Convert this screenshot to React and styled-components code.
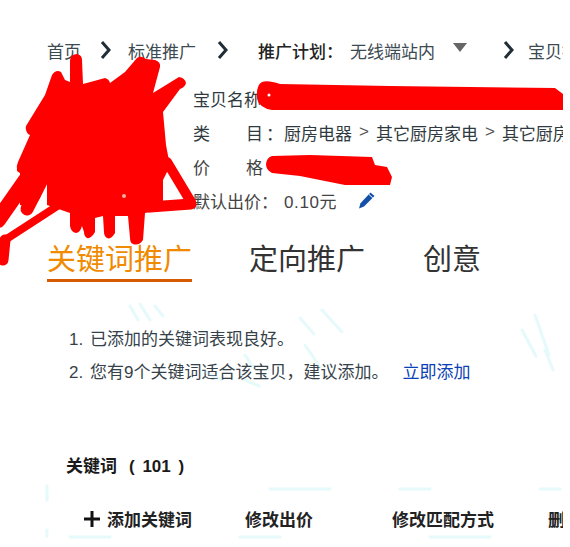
import React from 'react';
import styled, { createGlobalStyle } from 'styled-components';

const GlobalStyle = createGlobalStyle`
  html, body {
    margin: 0;
    padding: 0;
    background: #fff;
  }
  body {
    font-family: "Liberation Sans", "Noto Sans CJK SC", sans-serif;
    color: #333;
  }
`;

const Page = styled.div`
  position: relative;
  width: 563px;
  height: 547px;
  overflow: hidden;
  padding: 39px 0 0 47px;
  box-sizing: border-box;
`;

const Crumbs = styled.div`
  display: flex;
  align-items: center;
  height: 22px;
  font-size: 17px;
  white-space: nowrap;
`;

const Crumb = styled.span`
  color: ${({ $strong }) => ($strong ? '#222' : '#3c4a52')};
  font-weight: ${({ $strong }) => ($strong ? 500 : 400)};
  margin-left: ${({ $gap }) => $gap || 0}px;
`;

const Chevron = styled.svg`
  width: 12px;
  height: 20px;
  flex: none;
  margin-left: ${({ $gap }) => $gap || 0}px;
`;

const Caret = styled.span`
  width: 0;
  height: 0;
  flex: none;
  margin: -6px 0 0 18px;
  border-left: 7px solid transparent;
  border-right: 7px solid transparent;
  border-top: 9px solid #666;
`;

const Info = styled.div`
  display: flex;
  flex-direction: column;
  margin: 20px 0 0 146px;
  font-size: 17px;
  white-space: nowrap;
`;

const Row = styled.div`
  display: flex;
  align-items: center;
  height: 34px;
  color: ${({ $soft }) => ($soft ? '#444' : '#2f3a40')};
`;

const Label = styled.span`
  width: 91px;
  flex: none;
  display: flex;
`;

const LabelPair = styled.span`
  display: flex;
  justify-content: space-between;
  width: 70px;
`;

const Colon = styled.span`
  margin-left: 3px;
`;

const Sep = styled.span`
  margin: 0 7px;
  color: #555;
`;

const Price = styled.span`
  letter-spacing: 0.6px;
`;

const Pencil = styled.svg`
  width: 18px;
  height: 18px;
  margin-left: 21px;
`;

const Tabs = styled.div`
  display: flex;
  margin-top: 23px;
  font-size: 29px;
  line-height: 40px;
  white-space: nowrap;
`;

const Tab = styled.div`
  height: 39px;
  margin-right: ${({ $gap }) => $gap}px;
  color: ${({ $active }) => ($active ? '#f08a00' : '#333')};
  border-bottom: ${({ $active }) => ($active ? '3px solid #d65a00' : '3px solid transparent')};
`;

const Tips = styled.ol`
  list-style: none;
  margin: 41px 0 0 22px;
  padding: 0;
  font-size: 17px;
`;

const Tip = styled.li`
  height: 33px;
  line-height: 33px;
  color: #36424a;
  white-space: nowrap;
  display: flex;
`;

const TipNumber = styled.span`
  width: 21px;
  flex: none;
`;

const AddLink = styled.a`
  color: #0a3fb5;
  margin-left: 14px;
`;

const Heading = styled.div`
  margin: 67px 0 0 19px;
  font-size: 17px;
  font-weight: 700;
  color: #1a1a1a;
  line-height: 22px;
`;

const Count = styled.span`
  margin-left: 12px;
  word-spacing: 3px;
`;

const Toolbar = styled.div`
  display: flex;
  align-items: center;
  margin: 28px 0 0 37px;
  font-size: 17px;
  font-weight: 700;
  color: #222;
  white-space: nowrap;
`;

const ToolButton = styled.span`
  display: flex;
  align-items: center;
  margin-right: ${({ $gap }) => $gap}px;
`;

const PlusIcon = styled.svg`
  width: 16px;
  height: 16px;
  margin-right: 7px;
`;

const Scribble = styled.svg`
  position: absolute;
  left: 0;
  top: 0;
  width: 563px;
  height: 547px;
  pointer-events: none;
`;

const Smudges = styled.svg`
  position: absolute;
  left: 0;
  top: 0;
  width: 563px;
  height: 547px;
  pointer-events: none;
  opacity: 0.3;
`;

const chevron = <path d="M2 2l7 8-7 8" fill="none" stroke="#1f2d36" strokeWidth="3" />;

export default function App() {
  return (
    <>
      <GlobalStyle />
      <Page>
        <Smudges viewBox="0 0 563 547">
          <g stroke="#aeeef5" strokeWidth="3" fill="none" strokeLinecap="round">
            <path d="M130 306l8 14M140 304l10 16M155 306l8 10" />
            <path d="M300 318l14 16M322 310l20 22M305 345l15 22" />
            <path d="M522 330l14 26M535 315l14 40M545 350l8 20" />
            <path d="M245 355l8 12M205 372l16 8M245 380l14 6" />
            <path d="M270 489h60M400 489h30M540 489h20" />
            <path d="M47 486v14M47 530v6" />
            <path d="M70 537h40M240 537h40M430 537h60" />
          </g>
        </Smudges>

        <Crumbs>
          <Crumb>首页</Crumb>
          <Chevron $gap={19} viewBox="0 0 12 20">{chevron}</Chevron>
          <Crumb $gap={16}>标准推广</Crumb>
          <Chevron $gap={21} viewBox="0 0 12 20">{chevron}</Chevron>
          <Crumb $gap={29} $strong>推广计划：</Crumb>
          <Crumb $gap={7}>无线端站内</Crumb>
          <Caret />
          <Chevron $gap={36} viewBox="0 0 12 20">{chevron}</Chevron>
          <Crumb $gap={13}>宝贝推广</Crumb>
        </Crumbs>

        <Info>
          <Row>宝贝名称</Row>
          <Row>
            <Label>
              <LabelPair><span>类</span><span>目</span></LabelPair>
              <Colon>：</Colon>
            </Label>
            厨房电器<Sep>&gt;</Sep>其它厨房家电<Sep>&gt;</Sep>其它厨房家电
          </Row>
          <Row $soft>
            <Label>
              <LabelPair><span>价</span><span>格</span></LabelPair>
            </Label>
          </Row>
          <Row $soft>
            <Label>默认出价：</Label>
            <Price>0.10元</Price>
            <Pencil viewBox="0 0 18 18">
              <path d="M12.5 1.5l4 3.5L6 15.5l-5 2 1.5-5.2z" fill="#1450a8" />
              <path d="M11 3.5l3.8 3.4" stroke="#fff" strokeWidth="1" />
            </Pencil>
          </Row>
        </Info>

        <Tabs>
          <Tab $active $gap={57}>关键词推广</Tab>
          <Tab $gap={58}>定向推广</Tab>
          <Tab $gap={0}>创意</Tab>
        </Tabs>

        <Tips>
          <Tip><TipNumber>1.</TipNumber>已添加的关键词表现良好。</Tip>
          <Tip>
            <TipNumber>2.</TipNumber>您有9个关键词适合该宝贝，建议添加。
            <AddLink>立即添加</AddLink>
          </Tip>
        </Tips>

        <Heading>关键词<Count>( 101 )</Count></Heading>

        <Toolbar>
          <ToolButton $gap={53}>
            <PlusIcon viewBox="0 0 16 16">
              <path d="M8 0v16M0 8h16" stroke="#111" strokeWidth="3" />
            </PlusIcon>
            添加关键词
          </ToolButton>
          <ToolButton $gap={79}>修改出价</ToolButton>
          <ToolButton $gap={54}>修改匹配方式</ToolButton>
          <ToolButton $gap={0}>删除</ToolButton>
        </Toolbar>

        <Scribble viewBox="0 0 563 547">
          <g fill="#fe0000">
            <path d="M70 60 Q71 54 77 54 Q82 55 82 60 L83 84 L105 78 Q109 79 110 83 L125 72 L137 58 Q141 55 146 59 L155 60 Q161 62 160 67 L153 93 L179 77 Q185 78 186 83 Q185 87 180 89 L163 112 L166 145 L170 166 L163 180 L163 210 L145 213 L143 240 Q139 246 133 244 Q130 243 130 238 L128 216 L115 216 L115 233 Q111 240 107 238 Q104 236 104 232 L103 216 L95 218 L95 232 Q91 239 87 238 Q84 236 84 232 L82 226 Q80 233 76 233 Q71 232 70 226 L70 213 L47 205 L47 178 L24 176 L17 171 Q16 166 18 162 L30 135 L28 134 Q25 130 26 126 L45 95 L52 75 Q56 69 61 72 L65 80 L70 82 Z" />
            <path d="M262 82 Q268 80 280 84 L390 86 L555 88 L563 94 L563 110 L272 110 Q259 108 257 98 Q256 85 262 82 Z" />
            <path d="M272 156 L310 155 L372 157 L375 165 L387 167 L392 177 L390 185 L345 185 L300 176 L272 173 Q266 170 266 164 Q267 157 272 156 Z" />
            <path d="M20 172 L50 172 L40 198 L33 208 L20 205 Z" />
          </g>
          <circle cx="269" cy="95" r="1.5" fill="#fff" />
          <circle cx="124" cy="196" r="2" fill="#f7b0a0" />
          <g fill="none" stroke="#fe0000" strokeLinecap="round" strokeLinejoin="round">
            <path d="M46 172 L27 209" strokeWidth="13" />
            <path d="M62 203 L5 240" strokeWidth="8" />
            <path d="M5 240 L3 260" strokeWidth="11" />
            <path d="M-2 220 L26 180" strokeWidth="16" />
            <path d="M167 162 L191 202" strokeWidth="10" />
            <path d="M191 204 L150 207" strokeWidth="11" />
          </g>
        </Scribble>
      </Page>
    </>
  );
}
